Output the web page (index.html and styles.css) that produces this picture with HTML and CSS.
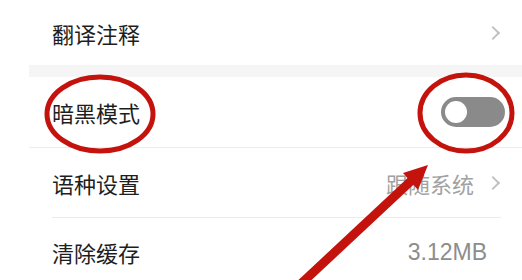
FILE: index.html
```html
<!doctype html>
<html lang="zh-CN">
<head>
    <meta charset="UTF-8">
    <title>设置</title>
    <link rel="stylesheet" href="styles.css">
</head>
<body>
    <div class="page">
        <div class="group">
            <div class="row first">
                <span class="label">翻译注释</span>
                <span class="chev"></span>
            </div>
        </div>
        <div class="gap"></div>
        <div class="group">
            <div class="row">
                <span class="label">暗黑模式</span>
                <span class="switch"><i></i></span>
            </div>
            <div class="row line-full">
                <span class="label">语种设置</span>
                <span class="value">跟随系统</span>
                <span class="chev"></span>
            </div>
            <div class="row line-inset">
                <span class="label">清除缓存</span>
                <span class="value cache">3.12MB</span>
            </div>
        </div>

        <!-- 红色标注 -->
        <svg class="marks" width="522" height="280" viewBox="0 0 522 280">
            <ellipse cx="100" cy="114" rx="53" ry="37" fill="none" stroke="#c3130c" stroke-width="5"/>
            <ellipse cx="466" cy="113" rx="46" ry="38" fill="none" stroke="#c3130c" stroke-width="5"/>
            <line x1="290" y1="294" x2="412" y2="180" stroke="#c3130c" stroke-width="9"/>
            <polygon points="428,165 418,190 403,173" fill="#c3130c"/>
        </svg>
    </div>
</body>
</html>
```

FILE: styles.css
```css
* {
    margin: 0;
    padding: 0;
    box-sizing: border-box;
}

body {
    background: #fff;
    font-family: "Noto Sans CJK SC", "Noto Sans", sans-serif;
    overflow: hidden;
}

.page {
    position: relative;
    width: 522px;
    height: 280px;
    overflow: hidden;
    padding-left: 29px;
}

.group {
    background: #fff;
}

.gap {
    height: 12px;
    background: #f5f5f5;
}

.row {
    position: relative;
    display: flex;
    align-items: center;
    height: 70px;
    padding: 0 22px 0 23px;
    gap: 10px;
}

.row.first {
    height: 65px;
}

.row + .row {
    border-top: 1px solid #ececec;
}

.row.line-inset {
    border-top: 0;
}

.row.line-inset::before {
    content: "";
    position: absolute;
    top: 0;
    left: 23px;
    right: 21px;
    border-top: 1px solid #ececec;
}

.label {
    flex: 1;
    font-size: 22px;
    color: #1e1e1e;
    line-height: 1;
}

.value {
    font-size: 22px;
    color: #a2a2a2;
    line-height: 1;
    margin-right: 4px;
}

.value.cache {
    font-family: "Liberation Sans", "Noto Sans", sans-serif;
    font-size: 23px;
    color: #8d8d8d;
    margin-right: 13px;
}

.chev {
    width: 10px;
    height: 10px;
    border-top: 2px solid #c2c2c2;
    border-right: 2px solid #c2c2c2;
    transform: rotate(45deg);
    margin-right: 2px;
}

.switch {
    position: relative;
    width: 64px;
    height: 30px;
    border-radius: 15px;
    background: #8a8a8a;
    margin-right: -5px;
}

.switch i {
    position: absolute;
    left: 4px;
    top: 4px;
    width: 22px;
    height: 22px;
    border-radius: 50%;
    background: #fff;
}

.marks {
    position: absolute;
    left: 0;
    top: 0;
    pointer-events: none;
}
```
